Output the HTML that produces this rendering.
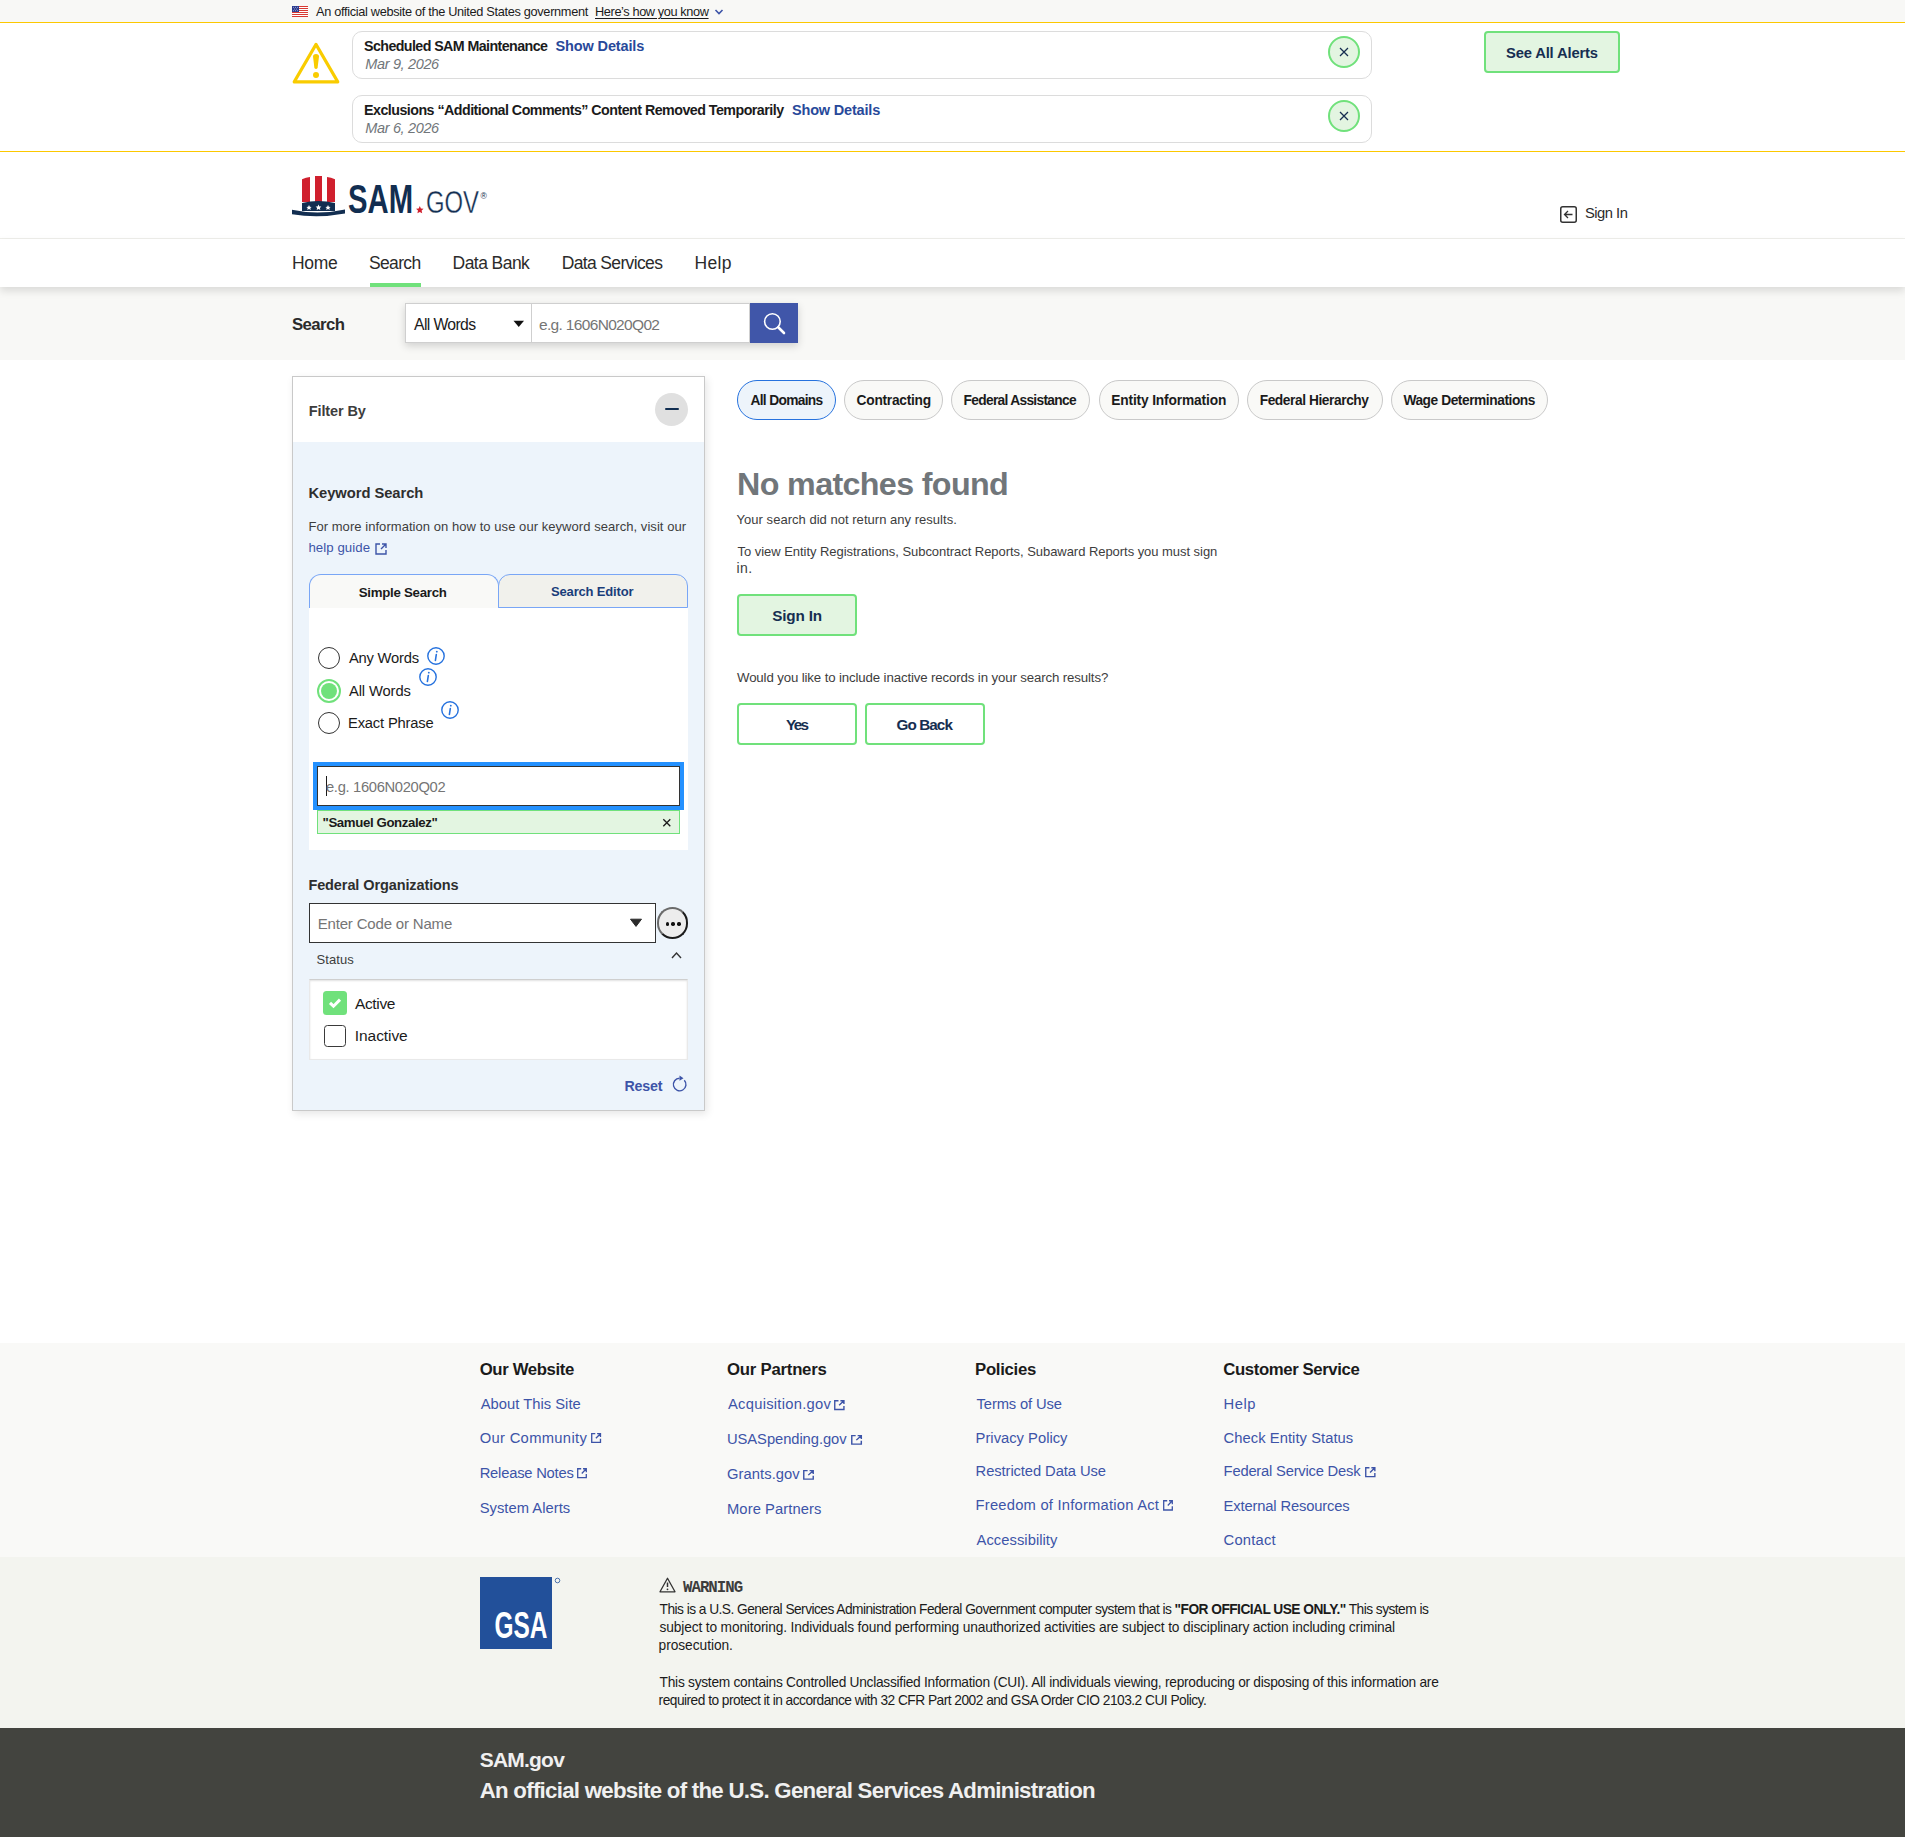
<!DOCTYPE html>
<html><head><meta charset="utf-8"><title>SAM.gov Search</title>
<style>
html,body{margin:0;padding:0}
body{width:1905px;height:1837px;position:relative;overflow:hidden;background:#fff;font-family:"Liberation Sans",sans-serif}
.a{position:absolute;box-sizing:border-box}
.t{position:absolute;white-space:nowrap;line-height:1}
svg{position:absolute;overflow:visible}
</style></head><body>

<!-- gov banner -->
<div class="a" style="left:0;top:0;width:1905px;height:22px;background:#f8f8f6"></div>
<div class="a" style="left:0;top:22px;width:1905px;height:1px;background:#fcc800"></div>
<svg style="left:292px;top:6px" width="16" height="11" viewBox="0 0 16 11">
  <rect width="16" height="11" fill="#fff"/>
  <g fill="#d83933"><rect y="0" width="16" height="1"/><rect y="2" width="16" height="1"/><rect y="4" width="16" height="1"/><rect y="6" width="16" height="1"/><rect y="8" width="16" height="1"/><rect y="10" width="16" height="1"/></g>
  <rect width="7" height="6" fill="#2b3b8f"/>
  <g fill="#fff"><circle cx="1.5" cy="1.2" r=".45"/><circle cx="3.5" cy="1.2" r=".45"/><circle cx="5.5" cy="1.2" r=".45"/><circle cx="2.5" cy="3" r=".45"/><circle cx="4.5" cy="3" r=".45"/><circle cx="1.5" cy="4.8" r=".45"/><circle cx="3.5" cy="4.8" r=".45"/><circle cx="5.5" cy="4.8" r=".45"/></g>
</svg>
<svg style="left:714px;top:8px" width="10" height="8" viewBox="0 0 10 8"><path d="M1.5 2 L5 5.5 L8.5 2" fill="none" stroke="#3d54a8" stroke-width="1.6"/></svg>

<!-- alerts -->
<div class="a" style="left:0;top:151px;width:1905px;height:1px;background:#fcc800"></div>
<svg style="left:292px;top:42px" width="48" height="42" viewBox="0 0 48 42">
  <path d="M24 2.4 L45.8 39.9 L2.2 39.9 Z" fill="none" stroke="#f9cc00" stroke-width="3.1" stroke-linejoin="round"/>
  <path d="M21 14.6 Q21 11.9 24 11.9 Q27 11.9 27 14.6 L25.6 26 Q24 27.8 22.4 26 Z" fill="#f9cc00"/>
  <circle cx="24" cy="33" r="3" fill="#f9cc00"/>
</svg>
<div class="a" style="left:352px;top:31px;width:1020px;height:48px;border:1px solid #dcdcdc;border-radius:10px"></div>
<div class="a" style="left:352px;top:95px;width:1020px;height:48px;border:1px solid #dcdcdc;border-radius:10px"></div>
<div class="a" style="left:1328px;top:36px;width:32px;height:32px;border:2px solid #70e17b;border-radius:50%;background:#e3f5e1"></div>
<div class="a" style="left:1328px;top:100px;width:32px;height:32px;border:2px solid #70e17b;border-radius:50%;background:#e3f5e1"></div>
<svg style="left:1339px;top:47px" width="10" height="10" viewBox="0 0 10 10"><path d="M1 1 L9 9 M9 1 L1 9" stroke="#162e51" stroke-width="1.25"/></svg>
<svg style="left:1339px;top:111px" width="10" height="10" viewBox="0 0 10 10"><path d="M1 1 L9 9 M9 1 L1 9" stroke="#162e51" stroke-width="1.25"/></svg>
<div class="a" style="left:1484px;top:31px;width:136px;height:42px;border:2px solid #70e17b;border-radius:4px;background:#e3f5e1"></div>

<!-- header -->
<svg style="left:292px;top:176px" width="196" height="42" viewBox="0 0 196 42">
  <path d="M10 3.2 Q14 1.6 18 1 L18 26 L10 26 Z" fill="#d0202e"/>
  <path d="M23 0 L30 0 L30 26 L23 26 Z" fill="#d0202e"/>
  <path d="M35 1 Q39 1.6 43 3.2 L43 26 L35 26 Z" fill="#d0202e"/>
  <path d="M10 27 Q26 23 43 27 L43 35 L10 35 Z" fill="#122e51"/>
  <g fill="#fff"><path d="M17 29 l.8 1.7 1.8.2 -1.3 1.2 .4 1.8 -1.7-.9 -1.7.9 .4-1.8 -1.3-1.2 1.8-.2z"/><path d="M26.5 28.5 l.9 1.9 2 .2 -1.5 1.3 .4 2 -1.8-1 -1.8 1 .4-2 -1.5-1.3 2-.2z"/><path d="M36 29 l.8 1.7 1.8.2 -1.3 1.2 .4 1.8 -1.7-.9 -1.7.9 .4-1.8 -1.3-1.2 1.8-.2z"/></g>
  <path d="M0 33.8 Q26 39.5 53 33.5 L53 37.5 Q26 42.5 0 38.2 Z" fill="#122e51"/>
  <text x="56" y="37" font-family="Liberation Sans" font-weight="700" font-size="40" fill="#122e51" textLength="65" lengthAdjust="spacingAndGlyphs">SAM</text>
  <path d="M127.8 30 l1.1 2.5 2.7.3 -2 1.8 .6 2.7 -2.4-1.4 -2.4 1.4 .6-2.7 -2-1.8 2.7-.3z" fill="#d0202e"/>
  <text x="134" y="37.4" font-family="Liberation Sans" font-weight="400" font-size="30.5" fill="#122e51" stroke="#fff" stroke-width="0.35" textLength="53" lengthAdjust="spacingAndGlyphs">GOV</text>
  <text x="188.4" y="23.2" font-family="Liberation Sans" font-size="8.6" fill="#122e51">®</text>
</svg>
<svg style="left:1560px;top:206px" width="18" height="18" viewBox="0 0 18 18">
  <rect x=".75" y=".75" width="15.5" height="15.5" rx="2" fill="none" stroke="#333" stroke-width="1.5"/>
  <path d="M12.5 8.5 L4.5 8.5 M8 5 L4.5 8.5 L8 12" fill="none" stroke="#333" stroke-width="1.3"/>
</svg>
<div class="a" style="left:0;top:238px;width:1905px;height:1px;background:#efefeb"></div>
<div class="a" style="left:0;top:287px;width:1905px;height:73px;background:#f8f8f6"></div>
<div class="a" style="left:0;top:239px;width:1905px;height:48px;background:#fff;box-shadow:0 4px 8px rgba(0,0,0,.12)"></div>
<div class="a" style="left:370px;top:283px;width:51px;height:4px;background:#70e17b"></div>

<!-- search band -->
<div class="a" style="left:405px;top:303px;width:393px;height:40px;box-shadow:0 3px 8px rgba(0,0,0,.16)"></div>
<div class="a" style="left:405px;top:303px;width:127px;height:40px;border:1px solid #cfcfcf;background:#fff"></div>
<div class="a" style="left:531px;top:303px;width:219px;height:40px;border:1px solid #cfcfcf;background:#fff"></div>
<svg style="left:513px;top:320px" width="12" height="8" viewBox="0 0 12 8"><path d="M.5 .8 L11 .8 L5.75 7 Z" fill="#111"/></svg>
<div class="a" style="left:750px;top:303px;width:48px;height:40px;background:#4056a9"></div>
<svg style="left:762px;top:312px" width="24" height="24" viewBox="0 0 24 24">
  <circle cx="10.4" cy="9.5" r="7.8" fill="none" stroke="#fff" stroke-width="1.6"/>
  <path d="M16.2 15.3 L22 21" stroke="#fff" stroke-width="2.6" stroke-linecap="round"/>
</svg>

<!-- filter panel -->
<div class="a" style="left:292px;top:376px;width:413px;height:735px;border:1px solid #c9c9c9;background:#edf4fb;box-shadow:2px 3px 8px rgba(0,0,0,.10)"></div>
<div class="a" style="left:293px;top:377px;width:411px;height:65px;background:#fff"></div>
<div class="a" style="left:655px;top:393px;width:33px;height:33px;border-radius:50%;background:#e0e0e0"></div>
<div class="a" style="left:665px;top:408px;width:14px;height:2.4px;border-radius:1px;background:#112e51"></div>
<svg style="left:375px;top:543px" width="12" height="12" viewBox="0 0 12 12">
  <path d="M5 1 L1 1 L1 11 L11 11 L11 7" fill="none" stroke="#3d54a8" stroke-width="1.4"/>
  <path d="M6 6 L11 1 M7 1 L11 1 L11 5" fill="none" stroke="#3d54a8" stroke-width="1.4"/>
</svg>
<!-- tabs -->
<div class="a" style="left:309px;top:608px;width:379px;height:242px;background:#fff"></div>
<div class="a" style="left:309px;top:574px;width:190px;height:34px;background:#f9f9f7;border:1px solid #79a6f6;border-bottom:none;border-radius:12px 12px 0 0"></div>
<div class="a" style="left:498px;top:574px;width:190px;height:34px;background:#f1f1ec;border:1px solid #79a6f6;border-radius:12px 12px 0 0"></div>
<!-- radios -->
<div class="a" style="left:318px;top:647px;width:22px;height:22px;border:1.5px solid #333;border-radius:50%;background:#fff"></div>
<div class="a" style="left:317px;top:679px;width:24px;height:24px;border:2px solid #70e17b;border-radius:50%;background:#fff"></div>
<div class="a" style="left:321px;top:683px;width:16px;height:16px;border-radius:50%;background:#70e17b"></div>
<div class="a" style="left:318px;top:712px;width:22px;height:22px;border:1.5px solid #333;border-radius:50%;background:#fff"></div>
<svg style="left:427px;top:647px" width="18" height="18" viewBox="0 0 18 18"><circle cx="9" cy="9" r="8.2" fill="none" stroke="#2672de" stroke-width="1.4"/><path d="M9.8 4.6 v.1" stroke="#2672de" stroke-width="1.8" stroke-linecap="round"/><path d="M9.3 7.5 L8.4 13.5" stroke="#2672de" stroke-width="1.6" stroke-linecap="round"/></svg>
<svg style="left:419px;top:668px" width="18" height="18" viewBox="0 0 18 18"><circle cx="9" cy="9" r="8.2" fill="none" stroke="#2672de" stroke-width="1.4"/><path d="M9.8 4.6 v.1" stroke="#2672de" stroke-width="1.8" stroke-linecap="round"/><path d="M9.3 7.5 L8.4 13.5" stroke="#2672de" stroke-width="1.6" stroke-linecap="round"/></svg>
<svg style="left:441px;top:701px" width="18" height="18" viewBox="0 0 18 18"><circle cx="9" cy="9" r="8.2" fill="none" stroke="#2672de" stroke-width="1.4"/><path d="M9.8 4.6 v.1" stroke="#2672de" stroke-width="1.8" stroke-linecap="round"/><path d="M9.3 7.5 L8.4 13.5" stroke="#2672de" stroke-width="1.6" stroke-linecap="round"/></svg>
<!-- focused input -->
<div class="a" style="left:313px;top:762px;width:371px;height:48px;background:#2491ff"></div>
<div class="a" style="left:317px;top:766px;width:363px;height:40px;border:1px solid #333;background:#fff"></div>
<div class="a" style="left:326px;top:776px;width:1px;height:20px;background:#1b1b1b"></div>
<div class="a" style="left:317px;top:810px;width:363px;height:24px;border:1px solid #70e17b;background:#e3f5e1"></div>
<svg style="left:662px;top:818px" width="10" height="10" viewBox="0 0 10 10"><path d="M1.3 1.3 L8.3 8.3 M8.3 1.3 L1.3 8.3" stroke="#1b1b1b" stroke-width="1.3"/></svg>
<!-- federal orgs -->
<div class="a" style="left:309px;top:903px;width:347px;height:40px;border:1.5px solid #333;background:#fff"></div>
<svg style="left:629px;top:918px" width="14" height="10" viewBox="0 0 14 10"><path d="M1.5 1.2 L12.5 1.2 L7 8.4 Z" fill="#2b2b2b" stroke="#2b2b2b" stroke-width="1" stroke-linejoin="round"/></svg>
<div class="a" style="left:656.5px;top:907px;width:31.5px;height:31.5px;border:2px solid #1b1b1b;border-color:#6b6b6b #1b1b1b #1b1b1b #6b6b6b;border-radius:50%;background:#ededed;transform:rotate(0deg)"></div>
<div class="a" style="left:665.5px;top:922.2px;width:3.4px;height:3.4px;border-radius:50%;background:#111"></div>
<div class="a" style="left:671.4px;top:922.2px;width:3.4px;height:3.4px;border-radius:50%;background:#111"></div>
<div class="a" style="left:677.3px;top:922.2px;width:3.4px;height:3.4px;border-radius:50%;background:#111"></div>
<svg style="left:671px;top:951px" width="11" height="8" viewBox="0 0 11 8"><path d="M1 7 L5.5 2 L10 7" fill="none" stroke="#333" stroke-width="1.4"/></svg>
<div class="a" style="left:309px;top:979px;width:379px;height:81px;background:#fff;border:1px solid #e9e9e9;border-top-color:#cfcfcf;box-shadow:inset 0 1px 2px rgba(0,0,0,.12)"></div>
<div class="a" style="left:323px;top:991px;width:24px;height:24px;border-radius:3.5px;background:#70e17b"></div>
<svg style="left:323px;top:991px" width="24" height="24" viewBox="0 0 24 24"><path d="M7 11.8 L10.5 15.2 L17 8.6" fill="none" stroke="#fff" stroke-width="3"/></svg>
<div class="a" style="left:324px;top:1025px;width:22px;height:22px;border:1.6px solid #3a3a3a;border-radius:3.5px;background:#fff"></div>
<svg style="left:672px;top:1075px" width="16" height="17" viewBox="0 0 16 17">
  <path d="M12.3 5.2 A6.3 6.3 0 1 1 7.5 3.2" fill="none" stroke="#3d54a8" stroke-width="1.4"/>
  <path d="M7.5 0.6 L11.5 3.2 L7.5 5.8 Z" fill="#3d54a8"/>
</svg>

<!-- right content: pills -->
<div class="a" style="left:737px;top:380px;width:99px;height:40px;border:1.5px solid #2672de;border-radius:20px;background:#edf4fb"></div>
<div class="a" style="left:844px;top:380px;width:99px;height:40px;border:1px solid #c9c9c9;border-radius:20px;background:#f9f9f7"></div>
<div class="a" style="left:951px;top:380px;width:139px;height:40px;border:1px solid #c9c9c9;border-radius:20px;background:#f9f9f7"></div>
<div class="a" style="left:1099px;top:380px;width:140px;height:40px;border:1px solid #c9c9c9;border-radius:20px;background:#f9f9f7"></div>
<div class="a" style="left:1247px;top:380px;width:136px;height:40px;border:1px solid #c9c9c9;border-radius:20px;background:#f9f9f7"></div>
<div class="a" style="left:1391px;top:380px;width:157px;height:40px;border:1px solid #c9c9c9;border-radius:20px;background:#f9f9f7"></div>
<!-- buttons -->
<div class="a" style="left:737px;top:594px;width:120px;height:42px;border:2px solid #70e17b;border-radius:4px;background:#e3f5e1"></div>
<div class="a" style="left:737px;top:703px;width:120px;height:42px;border:2px solid #70e17b;border-radius:4px;background:#fff"></div>
<div class="a" style="left:865px;top:703px;width:120px;height:42px;border:2px solid #70e17b;border-radius:4px;background:#fff"></div>

<!-- footer -->
<div class="a" style="left:0;top:1343px;width:1905px;height:214px;background:#f9f9f7"></div>
<div class="a" style="left:0;top:1557px;width:1905px;height:171px;background:#f3f4ef"></div>
<div class="a" style="left:0;top:1728px;width:1905px;height:109px;background:#43443f"></div>
<svg style="left:590px;top:1433px;width:0;height:0"></svg>
<svg style="left:590.5px;top:1433.0px" width="10.2" height="10.0" viewBox="0 0 10 10" preserveAspectRatio="none"><path d="M4.2 .7 L.7 .7 L.7 9.3 L9.3 9.3 L9.3 5.8" fill="none" stroke="#3d54a8" stroke-width="1.3"/><path d="M4.8 5.2 L9.2 .8 M6 .7 L9.3 .7 L9.3 4" fill="none" stroke="#3d54a8" stroke-width="1.3"/></svg>
<svg style="left:577.0px;top:1467.6px" width="10.0" height="10.4" viewBox="0 0 10 10" preserveAspectRatio="none"><path d="M4.2 .7 L.7 .7 L.7 9.3 L9.3 9.3 L9.3 5.8" fill="none" stroke="#3d54a8" stroke-width="1.3"/><path d="M4.8 5.2 L9.2 .8 M6 .7 L9.3 .7 L9.3 4" fill="none" stroke="#3d54a8" stroke-width="1.3"/></svg>
<svg style="left:834.0px;top:1400.0px" width="10.7" height="10.2" viewBox="0 0 10 10" preserveAspectRatio="none"><path d="M4.2 .7 L.7 .7 L.7 9.3 L9.3 9.3 L9.3 5.8" fill="none" stroke="#3d54a8" stroke-width="1.3"/><path d="M4.8 5.2 L9.2 .8 M6 .7 L9.3 .7 L9.3 4" fill="none" stroke="#3d54a8" stroke-width="1.3"/></svg>
<svg style="left:850.5px;top:1435.0px" width="11.1" height="9.8" viewBox="0 0 10 10" preserveAspectRatio="none"><path d="M4.2 .7 L.7 .7 L.7 9.3 L9.3 9.3 L9.3 5.8" fill="none" stroke="#3d54a8" stroke-width="1.3"/><path d="M4.8 5.2 L9.2 .8 M6 .7 L9.3 .7 L9.3 4" fill="none" stroke="#3d54a8" stroke-width="1.3"/></svg>
<svg style="left:803.0px;top:1470.0px" width="11.0" height="9.8" viewBox="0 0 10 10" preserveAspectRatio="none"><path d="M4.2 .7 L.7 .7 L.7 9.3 L9.3 9.3 L9.3 5.8" fill="none" stroke="#3d54a8" stroke-width="1.3"/><path d="M4.8 5.2 L9.2 .8 M6 .7 L9.3 .7 L9.3 4" fill="none" stroke="#3d54a8" stroke-width="1.3"/></svg>
<svg style="left:1163.0px;top:1500.0px" width="10.0" height="10.7" viewBox="0 0 10 10" preserveAspectRatio="none"><path d="M4.2 .7 L.7 .7 L.7 9.3 L9.3 9.3 L9.3 5.8" fill="none" stroke="#3d54a8" stroke-width="1.3"/><path d="M4.8 5.2 L9.2 .8 M6 .7 L9.3 .7 L9.3 4" fill="none" stroke="#3d54a8" stroke-width="1.3"/></svg>
<svg style="left:1364.6px;top:1466.6px" width="10.6" height="10.4" viewBox="0 0 10 10" preserveAspectRatio="none"><path d="M4.2 .7 L.7 .7 L.7 9.3 L9.3 9.3 L9.3 5.8" fill="none" stroke="#3d54a8" stroke-width="1.3"/><path d="M4.8 5.2 L9.2 .8 M6 .7 L9.3 .7 L9.3 4" fill="none" stroke="#3d54a8" stroke-width="1.3"/></svg>
<div class="a" style="left:480px;top:1577px;width:72px;height:72px;background:#22509a"></div>
<svg style="left:480px;top:1577px" width="84" height="72" viewBox="0 0 84 72">
  <text x="14.5" y="60.7" font-family="Liberation Sans" font-weight="700" font-size="36" fill="#fff" textLength="53" lengthAdjust="spacingAndGlyphs">GSA</text>
  <circle cx="77.5" cy="3.5" r="2.3" fill="none" stroke="#22509a" stroke-width=".8"/>
</svg>
<svg style="left:659px;top:1577px" width="17" height="16" viewBox="0 0 17 16">
  <path d="M8.5 1.2 L16 14.8 L1 14.8 Z" fill="none" stroke="#333" stroke-width="1.3" stroke-linejoin="round"/>
  <path d="M8.5 5.5 L8.5 10" stroke="#333" stroke-width="1.5"/><circle cx="8.5" cy="12.3" r=".9" fill="#333"/>
</svg>

<div class="t" style="left:316.00px;top:6.00px;font-family:'Liberation Sans';font-size:12.75px;font-weight:400;font-style:normal;letter-spacing:-0.320px;color:#1b1b1b;">An official website of the United States government</div>
<div class="t" style="left:595.00px;top:6.00px;font-family:'Liberation Sans';font-size:12.75px;font-weight:400;font-style:normal;letter-spacing:-0.389px;color:#1b1b1b;text-decoration:underline;text-underline-offset:1.5px;">Here’s how you know</div>
<div class="t" style="left:364.00px;top:39.00px;font-family:'Liberation Sans';font-size:14.25px;font-weight:700;font-style:normal;letter-spacing:-0.583px;color:#1b1b1b;">Scheduled SAM Maintenance</div>
<div class="t" style="left:555.60px;top:39.00px;font-family:'Liberation Sans';font-size:14.5px;font-weight:700;font-style:normal;letter-spacing:-0.145px;color:#28499a;">Show Details</div>
<div class="t" style="left:365.30px;top:57.00px;font-family:'Liberation Sans';font-size:14.5px;font-weight:400;font-style:italic;letter-spacing:-0.350px;color:#71767a;">Mar 9, 2026</div>
<div class="t" style="left:364.00px;top:103.00px;font-family:'Liberation Sans';font-size:14.25px;font-weight:700;font-style:normal;letter-spacing:-0.525px;color:#1b1b1b;">Exclusions “Additional Comments” Content Removed Temporarily</div>
<div class="t" style="left:792.00px;top:103.00px;font-family:'Liberation Sans';font-size:14.5px;font-weight:700;font-style:normal;letter-spacing:-0.182px;color:#28499a;">Show Details</div>
<div class="t" style="left:365.30px;top:121.00px;font-family:'Liberation Sans';font-size:14.5px;font-weight:400;font-style:italic;letter-spacing:-0.350px;color:#71767a;">Mar 6, 2026</div>
<div class="t" style="left:1506.00px;top:46.00px;font-family:'Liberation Sans';font-size:14.75px;font-weight:700;font-style:normal;letter-spacing:-0.154px;color:#162e51;">See All Alerts</div>
<div class="t" style="left:1585.00px;top:206.00px;font-family:'Liberation Sans';font-size:14.75px;font-weight:400;font-style:normal;letter-spacing:-0.500px;color:#2b2b2b;">Sign In</div>
<div class="t" style="left:292.00px;top:255.00px;font-family:'Liberation Sans';font-size:17.5px;font-weight:400;font-style:normal;letter-spacing:-0.333px;color:#2b2b2b;">Home</div>
<div class="t" style="left:369.00px;top:255.00px;font-family:'Liberation Sans';font-size:17.5px;font-weight:400;font-style:normal;letter-spacing:-0.660px;color:#2b2b2b;">Search</div>
<div class="t" style="left:452.60px;top:255.00px;font-family:'Liberation Sans';font-size:17.5px;font-weight:400;font-style:normal;letter-spacing:-0.562px;color:#2b2b2b;">Data Bank</div>
<div class="t" style="left:561.70px;top:255.00px;font-family:'Liberation Sans';font-size:17.5px;font-weight:400;font-style:normal;letter-spacing:-0.642px;color:#2b2b2b;">Data Services</div>
<div class="t" style="left:694.50px;top:255.00px;font-family:'Liberation Sans';font-size:17.5px;font-weight:400;font-style:normal;letter-spacing:0.333px;color:#2b2b2b;">Help</div>
<div class="t" style="left:292.00px;top:316.50px;font-family:'Liberation Sans';font-size:16.75px;font-weight:700;font-style:normal;letter-spacing:-0.600px;color:#2b2b2b;">Search</div>
<div class="t" style="left:414.00px;top:316.50px;font-family:'Liberation Sans';font-size:15.75px;font-weight:400;font-style:normal;letter-spacing:-0.625px;color:#1b1b1b;">All Words</div>
<div class="t" style="left:539.00px;top:316.50px;font-family:'Liberation Sans';font-size:15.5px;font-weight:400;font-style:normal;letter-spacing:-0.667px;color:#757575;">e.g. 1606N020Q02</div>
<div class="t" style="left:308.80px;top:404.00px;font-family:'Liberation Sans';font-size:14.5px;font-weight:700;font-style:normal;letter-spacing:-0.125px;color:#3d3d3d;">Filter By</div>
<div class="t" style="left:308.40px;top:486.00px;font-family:'Liberation Sans';font-size:14.75px;font-weight:700;font-style:normal;letter-spacing:-0.046px;color:#2e2e2e;">Keyword Search</div>
<div class="t" style="left:308.40px;top:520.00px;font-family:'Liberation Sans';font-size:13.0px;font-weight:400;font-style:normal;letter-spacing:0.054px;color:#3d3d3d;">For more information on how to use our keyword search, visit our</div>
<div class="t" style="left:308.40px;top:541.40px;font-family:'Liberation Sans';font-size:13.25px;font-weight:400;font-style:normal;letter-spacing:0.056px;color:#3d54a8;">help guide</div>
<div class="t" style="left:358.80px;top:586.00px;font-family:'Liberation Sans';font-size:13.25px;font-weight:700;font-style:normal;letter-spacing:-0.275px;color:#1b1b1b;">Simple Search</div>
<div class="t" style="left:551.00px;top:585.00px;font-family:'Liberation Sans';font-size:13.0px;font-weight:700;font-style:normal;letter-spacing:-0.167px;color:#1a3e7a;">Search Editor</div>
<div class="t" style="left:349.00px;top:650.70px;font-family:'Liberation Sans';font-size:14.75px;font-weight:400;font-style:normal;letter-spacing:-0.225px;color:#1b1b1b;">Any Words</div>
<div class="t" style="left:349.00px;top:683.50px;font-family:'Liberation Sans';font-size:14.75px;font-weight:400;font-style:normal;letter-spacing:-0.125px;color:#1b1b1b;">All Words</div>
<div class="t" style="left:348.00px;top:716.00px;font-family:'Liberation Sans';font-size:14.75px;font-weight:400;font-style:normal;letter-spacing:-0.182px;color:#1b1b1b;">Exact Phrase</div>
<div class="t" style="left:326.00px;top:779.60px;font-family:'Liberation Sans';font-size:14.75px;font-weight:400;font-style:normal;letter-spacing:-0.333px;color:#757575;">e.g. 1606N020Q02</div>
<div class="t" style="left:322.50px;top:815.60px;font-family:'Liberation Sans';font-size:13.25px;font-weight:700;font-style:normal;letter-spacing:-0.388px;color:#1b1b1b;">"Samuel Gonzalez"</div>
<div class="t" style="left:308.40px;top:878.00px;font-family:'Liberation Sans';font-size:14.5px;font-weight:700;font-style:normal;letter-spacing:-0.100px;color:#2e2e2e;">Federal Organizations</div>
<div class="t" style="left:317.70px;top:915.80px;font-family:'Liberation Sans';font-size:15.0px;font-weight:400;font-style:normal;letter-spacing:-0.176px;color:#757575;">Enter Code or Name</div>
<div class="t" style="left:316.60px;top:953.00px;font-family:'Liberation Sans';font-size:13.0px;font-weight:400;font-style:normal;letter-spacing:0.080px;color:#3d3d3d;">Status</div>
<div class="t" style="left:355.00px;top:996.00px;font-family:'Liberation Sans';font-size:15.5px;font-weight:400;font-style:normal;letter-spacing:-0.360px;color:#1b1b1b;">Active</div>
<div class="t" style="left:354.80px;top:1027.80px;font-family:'Liberation Sans';font-size:15.5px;font-weight:400;font-style:normal;letter-spacing:-0.071px;color:#1b1b1b;">Inactive</div>
<div class="t" style="left:624.50px;top:1078.70px;font-family:'Liberation Sans';font-size:14.25px;font-weight:700;font-style:normal;letter-spacing:-0.200px;color:#3d54a8;">Reset</div>
<div class="t" style="left:750.40px;top:394.00px;font-family:'Liberation Sans';font-size:13.75px;font-weight:700;font-style:normal;letter-spacing:-0.660px;color:#1b1b1b;">All Domains</div>
<div class="t" style="left:856.60px;top:394.00px;font-family:'Liberation Sans';font-size:13.75px;font-weight:700;font-style:normal;letter-spacing:-0.260px;color:#1b1b1b;">Contracting</div>
<div class="t" style="left:963.60px;top:394.00px;font-family:'Liberation Sans';font-size:13.75px;font-weight:700;font-style:normal;letter-spacing:-0.700px;color:#1b1b1b;">Federal Assistance</div>
<div class="t" style="left:1111.20px;top:394.00px;font-family:'Liberation Sans';font-size:13.75px;font-weight:700;font-style:normal;letter-spacing:-0.147px;color:#1b1b1b;">Entity Information</div>
<div class="t" style="left:1259.70px;top:394.00px;font-family:'Liberation Sans';font-size:13.75px;font-weight:700;font-style:normal;letter-spacing:-0.431px;color:#1b1b1b;">Federal Hierarchy</div>
<div class="t" style="left:1403.40px;top:394.00px;font-family:'Liberation Sans';font-size:13.75px;font-weight:700;font-style:normal;letter-spacing:-0.444px;color:#1b1b1b;">Wage Determinations</div>
<div class="t" style="left:737.10px;top:468.20px;font-family:'Liberation Sans';font-size:32.25px;font-weight:700;font-style:normal;letter-spacing:-0.647px;color:#71767a;">No matches found</div>
<div class="t" style="left:736.60px;top:512.80px;font-family:'Liberation Sans';font-size:13.0px;font-weight:400;font-style:normal;letter-spacing:0.026px;color:#3d3d3d;">Your search did not return any results.</div>
<div class="t" style="left:737.60px;top:544.80px;font-family:'Liberation Sans';font-size:13.0px;font-weight:400;font-style:normal;letter-spacing:-0.046px;color:#3d3d3d;">To view Entity Registrations, Subcontract Reports, Subaward Reports you must sign</div>
<div class="t" style="left:736.60px;top:561.00px;font-family:'Liberation Sans';font-size:14px;font-weight:400;font-style:normal;letter-spacing:0.350px;color:#3d3d3d;">in.</div>
<div class="t" style="left:772.30px;top:608.20px;font-family:'Liberation Sans';font-size:15.25px;font-weight:700;font-style:normal;letter-spacing:-0.167px;color:#162e51;">Sign In</div>
<div class="t" style="left:737.00px;top:671.40px;font-family:'Liberation Sans';font-size:13.25px;font-weight:400;font-style:normal;letter-spacing:-0.131px;color:#3d3d3d;">Would you like to include inactive records in your search results?</div>
<div class="t" style="left:786.00px;top:717.00px;font-family:'Liberation Sans';font-size:15.25px;font-weight:700;font-style:normal;letter-spacing:-1.650px;color:#162e51;">Yes</div>
<div class="t" style="left:896.50px;top:717.00px;font-family:'Liberation Sans';font-size:15.25px;font-weight:700;font-style:normal;letter-spacing:-0.917px;color:#162e51;">Go Back</div>
<div class="t" style="left:479.70px;top:1362.00px;font-family:'Liberation Sans';font-size:16.75px;font-weight:700;font-style:normal;letter-spacing:-0.370px;color:#1b1b1b;">Our Website</div>
<div class="t" style="left:727.00px;top:1362.00px;font-family:'Liberation Sans';font-size:16.75px;font-weight:700;font-style:normal;letter-spacing:-0.236px;color:#1b1b1b;">Our Partners</div>
<div class="t" style="left:975.00px;top:1362.00px;font-family:'Liberation Sans';font-size:16.75px;font-weight:700;font-style:normal;letter-spacing:-0.286px;color:#1b1b1b;">Policies</div>
<div class="t" style="left:1223.30px;top:1362.00px;font-family:'Liberation Sans';font-size:16.75px;font-weight:700;font-style:normal;letter-spacing:-0.400px;color:#1b1b1b;">Customer Service</div>
<div class="t" style="left:480.70px;top:1396.70px;font-family:'Liberation Sans';font-size:14.75px;font-weight:400;font-style:normal;letter-spacing:0.021px;color:#3d54a8;">About This Site</div>
<div class="t" style="left:479.70px;top:1430.60px;font-family:'Liberation Sans';font-size:14.75px;font-weight:400;font-style:normal;letter-spacing:0.317px;color:#3d54a8;">Our Community</div>
<div class="t" style="left:479.70px;top:1466.30px;font-family:'Liberation Sans';font-size:14.75px;font-weight:400;font-style:normal;letter-spacing:-0.217px;color:#3d54a8;">Release Notes</div>
<div class="t" style="left:479.70px;top:1501.00px;font-family:'Liberation Sans';font-size:14.75px;font-weight:400;font-style:normal;letter-spacing:0.025px;color:#3d54a8;">System Alerts</div>
<div class="t" style="left:728.00px;top:1396.90px;font-family:'Liberation Sans';font-size:14.75px;font-weight:400;font-style:normal;letter-spacing:0.257px;color:#3d54a8;">Acquisition.gov</div>
<div class="t" style="left:727.00px;top:1432.00px;font-family:'Liberation Sans';font-size:14.75px;font-weight:400;font-style:normal;letter-spacing:-0.071px;color:#3d54a8;">USASpending.gov</div>
<div class="t" style="left:727.00px;top:1467.00px;font-family:'Liberation Sans';font-size:14.75px;font-weight:400;font-style:normal;letter-spacing:0.067px;color:#3d54a8;">Grants.gov</div>
<div class="t" style="left:727.00px;top:1501.80px;font-family:'Liberation Sans';font-size:14.75px;font-weight:400;font-style:normal;letter-spacing:0.083px;color:#3d54a8;">More Partners</div>
<div class="t" style="left:976.60px;top:1396.80px;font-family:'Liberation Sans';font-size:14.75px;font-weight:400;font-style:normal;letter-spacing:-0.145px;color:#3d54a8;">Terms of Use</div>
<div class="t" style="left:975.60px;top:1431.00px;font-family:'Liberation Sans';font-size:14.75px;font-weight:400;font-style:normal;letter-spacing:0.008px;color:#3d54a8;">Privacy Policy</div>
<div class="t" style="left:975.60px;top:1463.80px;font-family:'Liberation Sans';font-size:14.75px;font-weight:400;font-style:normal;letter-spacing:-0.089px;color:#3d54a8;">Restricted Data Use</div>
<div class="t" style="left:975.60px;top:1498.00px;font-family:'Liberation Sans';font-size:14.75px;font-weight:400;font-style:normal;letter-spacing:0.216px;color:#3d54a8;">Freedom of Information Act</div>
<div class="t" style="left:976.60px;top:1532.80px;font-family:'Liberation Sans';font-size:14.75px;font-weight:400;font-style:normal;letter-spacing:0.033px;color:#3d54a8;">Accessibility</div>
<div class="t" style="left:1223.60px;top:1396.80px;font-family:'Liberation Sans';font-size:14.75px;font-weight:400;font-style:normal;letter-spacing:0.467px;color:#3d54a8;">Help</div>
<div class="t" style="left:1223.60px;top:1431.00px;font-family:'Liberation Sans';font-size:14.75px;font-weight:400;font-style:normal;letter-spacing:0.050px;color:#3d54a8;">Check Entity Status</div>
<div class="t" style="left:1223.60px;top:1463.80px;font-family:'Liberation Sans';font-size:14.75px;font-weight:400;font-style:normal;letter-spacing:-0.211px;color:#3d54a8;">Federal Service Desk</div>
<div class="t" style="left:1223.60px;top:1498.70px;font-family:'Liberation Sans';font-size:14.75px;font-weight:400;font-style:normal;letter-spacing:-0.153px;color:#3d54a8;">External Resources</div>
<div class="t" style="left:1223.60px;top:1532.80px;font-family:'Liberation Sans';font-size:14.75px;font-weight:400;font-style:normal;letter-spacing:0.200px;color:#3d54a8;">Contact</div>
<div class="t" style="left:683.00px;top:1580.50px;font-family:'Liberation Mono';font-size:15.75px;font-weight:700;font-style:normal;letter-spacing:-1.000px;color:#3d3d3d;">WARNING</div>
<div class="t" style="left:659.60px;top:1603.20px;font-family:'Liberation Sans';font-size:13.75px;font-weight:400;font-style:normal;letter-spacing:-0.544px;color:#1b1b1b;">This is a U.S. General Services Administration Federal Government computer system that is <b>"FOR OFFICIAL USE ONLY."</b> This system is</div>
<div class="t" style="left:659.60px;top:1621.40px;font-family:'Liberation Sans';font-size:13.75px;font-weight:400;font-style:normal;letter-spacing:-0.153px;color:#1b1b1b;">subject to monitoring. Individuals found performing unauthorized activities are subject to disciplinary action including criminal</div>
<div class="t" style="left:658.60px;top:1639.30px;font-family:'Liberation Sans';font-size:13.75px;font-weight:400;font-style:normal;letter-spacing:-0.055px;color:#1b1b1b;">prosecution.</div>
<div class="t" style="left:659.60px;top:1676.00px;font-family:'Liberation Sans';font-size:13.75px;font-weight:400;font-style:normal;letter-spacing:-0.272px;color:#1b1b1b;">This system contains Controlled Unclassified Information (CUI). All individuals viewing, reproducing or disposing of this information are</div>
<div class="t" style="left:658.60px;top:1694.00px;font-family:'Liberation Sans';font-size:13.75px;font-weight:400;font-style:normal;letter-spacing:-0.524px;color:#1b1b1b;">required to protect it in accordance with 32 CFR Part 2002 and GSA Order CIO 2103.2 CUI Policy.</div>
<div class="t" style="left:479.70px;top:1749.00px;font-family:'Liberation Sans';font-size:21px;font-weight:700;font-style:normal;letter-spacing:-0.783px;color:#f0f0f0;">SAM.gov</div>
<div class="t" style="left:479.70px;top:1780.00px;font-family:'Liberation Sans';font-size:22.25px;font-weight:700;font-style:normal;letter-spacing:-0.721px;color:#f0f0f0;">An official website of the U.S. General Services Administration</div>
</body></html>
